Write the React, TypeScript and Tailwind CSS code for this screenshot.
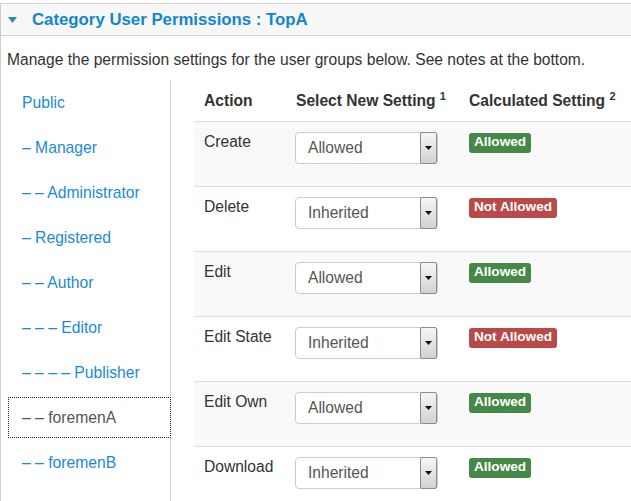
import React from "react";

type Perm = {
  action: string;
  setting: "Allowed" | "Inherited";
  calculated: boolean;
};

const GROUPS: { label: string; active?: boolean }[] = [
  { label: "Public" },
  { label: "– Manager" },
  { label: "– – Administrator" },
  { label: "– Registered" },
  { label: "– – Author" },
  { label: "– – – Editor" },
  { label: "– – – – Publisher" },
  { label: "– – foremenA", active: true },
  { label: "– – foremenB" },
];

const PERMS: Perm[] = [
  { action: "Create", setting: "Allowed", calculated: true },
  { action: "Delete", setting: "Inherited", calculated: false },
  { action: "Edit", setting: "Allowed", calculated: true },
  { action: "Edit State", setting: "Inherited", calculated: false },
  { action: "Edit Own", setting: "Allowed", calculated: true },
  { action: "Download", setting: "Inherited", calculated: true },
];

function FakeSelect({ value }: { value: string }) {
  return (
    <div className="flex h-[32px] w-[143px] items-stretch rounded-[4px] border border-[#cccccc] bg-white">
      <span className="flex flex-1 items-center pl-[12px] text-[15.6px] text-[#555]">
        {value}
      </span>
      <span className="my-[-1px] flex w-[17px] items-center justify-center rounded-[2px] border border-[#8c8c8c] bg-gradient-to-b from-[#f6f6f6] to-[#d2d2d2]">
        <svg width="7" height="4" viewBox="0 0 7 4">
          <path d="M0 0h7L3.5 4z" fill="#111" />
        </svg>
      </span>
    </div>
  );
}

function Badge({ ok }: { ok: boolean }) {
  return (
    <div className="flex">
      <span
        className={
          "flex h-[20px] items-center rounded-[3px] px-[5px] text-[13.6px] font-bold text-white " +
          (ok ? "bg-[#468847]" : "bg-[#b94a48]")
        }
      >
        {ok ? "Allowed" : "Not Allowed"}
      </span>
    </div>
  );
}

export default function App() {
  return (
    <div className="min-h-[501px] bg-white pt-[3px] font-['Liberation_Sans',Arial,sans-serif] text-[#333]">
      <div className="min-h-[498px] border-l border-[#cfcfcf]">
        {/* accordion heading */}
        <div className="flex h-[33px] items-center border-y border-[#d4d4d4] bg-[#f7f7f7]">
          <svg width="9" height="6" viewBox="0 0 9 6" className="ml-[7px]">
            <path d="M0 0h9L4.5 6z" fill="#2f86b4" />
          </svg>
          <span className="ml-[15px] text-[16.8px] font-bold text-[#1286cc]">
            Category User Permissions : TopA
          </span>
        </div>

        <p className="pl-[6px] pt-[14px] text-[15.6px] leading-[20px] text-[#333]">
          Manage the permission settings for the user groups below. See notes at
          the bottom.
        </p>

        <div className="mt-[10px] flex">
          {/* group tabs */}
          <ul className="w-[170px] shrink-0 border-r border-[#d6d6d6] pb-[40px]">
            {GROUPS.map((g) => (
              <li key={g.label} className="py-[2px]">
                <a
                  className={
                    "ml-[7px] -mr-px flex h-[41px] items-center border pl-[13px] text-[15.7px] " +
                    (g.active
                      ? "border-dotted border-[#222] bg-white text-[#555]"
                      : "border-transparent text-[#1a8bd3]")
                  }
                >
                  {g.label}
                </a>
              </li>
            ))}
          </ul>

          {/* permissions table */}
          <div className="ml-[23px] flex-1">
            <table className="w-full border-collapse text-[15.6px]">
              <thead>
                <tr className="h-[41px] border-b border-[#dddddd]">
                  <th className="w-[101px] pl-[10px] text-left font-bold">
                    Action
                  </th>
                  <th className="w-[174px] pl-[1px] text-left font-bold">
                    Select New Setting <sup className="text-[11px]">1</sup>
                  </th>
                  <th className="text-left font-bold">
                    Calculated Setting <sup className="text-[11px]">2</sup>
                  </th>
                </tr>
              </thead>
              <tbody>
                {PERMS.map((p, i) => (
                  <tr
                    key={p.action}
                    className={
                      "h-[65px] border-b border-[#dddddd] align-top " +
                      (i % 2 === 0 ? "bg-[#f9f9f9]" : "bg-white")
                    }
                  >
                    <td className="pl-[10px] pt-[10px] leading-[20px]">
                      {p.action}
                    </td>
                    <td className="pt-[10px]">
                      <FakeSelect value={p.setting} />
                    </td>
                    <td className="pt-[11px]">
                      <Badge ok={p.calculated} />
                    </td>
                  </tr>
                ))}
              </tbody>
            </table>
          </div>
        </div>
      </div>
    </div>
  );
}
